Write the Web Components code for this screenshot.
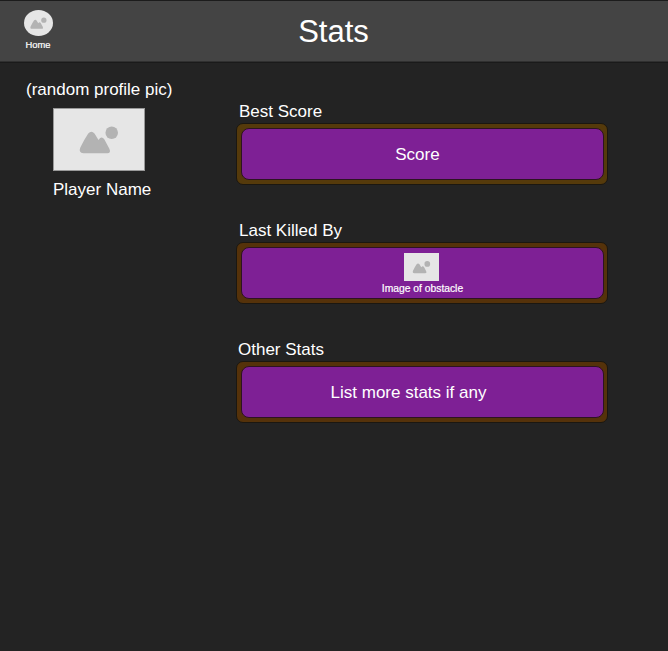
<!DOCTYPE html>
<html lang="en">
<head>
<meta charset="utf-8">
<title>Stats</title>
<style>
html,body{margin:0;height:100%;background:#232323}
body{font-family:"Liberation Sans",Arial,sans-serif;color:#fff;overflow:hidden}
</style>
</head>
<body>
<stats-page></stats-page>
<script>
const define = (name, html) => {
  const t = document.createElement('template');
  t.innerHTML = html;
  customElements.define(name, class extends HTMLElement {
    constructor() {
      super();
      this.attachShadow({mode: 'open'}).append(t.content.cloneNode(true));
    }
  });
};

define('picture-placeholder', `
<style>
:host{display:block;box-sizing:border-box;background:#e6e6e6;overflow:hidden}
svg{display:block;width:100%;height:100%}
</style>
<svg viewBox="0 0 92 63" preserveAspectRatio="xMidYMid slice" fill="#b3b3b3">
<circle cx="59" cy="24.6" r="6.4"/>
<path d="M30 45.5 Q24.8 45.3 26.9 39.8 Q30.5 32 35 25.3 Q38.2 21.6 41.4 25.3 L45.5 32 Q48.5 27.6 51.4 31.2 L56.6 41 Q58.6 45.5 54.5 45.5Z"/>
</svg>`);

define('home-link', `
<style>
:host{display:flex;flex-direction:column;align-items:center;width:29px;font-size:9.4px;line-height:11px;-webkit-text-stroke:.2px #fff}
picture-placeholder{width:29px;height:26px;border-radius:50%;margin-bottom:3px}
span{margin-right:1px}
</style>
<picture-placeholder></picture-placeholder><span><slot></slot></span>`);

define('top-bar', `
<style>
:host{display:grid;grid-template-columns:1fr auto 1fr;box-sizing:border-box;height:63px;background:#444;border-top:1px solid #1c1c1c;border-bottom:1px solid #1a1a1a;box-shadow:inset 0 -1px #303030}
.nav{padding:9px 0 0 24px}
h1{margin:13px 1px 0 0;font-size:31px;line-height:36px;font-weight:400}
</style>
<div class="nav"><slot name="nav"></slot></div><h1><slot></slot></h1>`);

define('player-card', `
<style>
:host{display:block;font-size:17px;line-height:20px}
.name{padding-left:27px;margin-top:9px}
picture-placeholder{width:92px;height:63px;border:1px solid #999;margin:8px 0 0 27px}
</style>
<div><slot name="caption"></slot></div>
<picture-placeholder></picture-placeholder>
<div class="name"><slot></slot></div>`);

define('stat-panel', `
<style>
:host{display:block;font-size:17px;line-height:20px}
.label{padding-left:var(--indent,3px)}
.frame{box-sizing:border-box;width:372px;height:62px;margin-top:1px;padding:4px 3px 4px 4px;background:var(--frame,#55320a);border:1px solid #1b1710;border-radius:7px}
.body{box-sizing:border-box;height:100%;border:1px solid #2d1322;border-radius:8px;background:#7e2095;display:flex;flex-direction:column;align-items:center;justify-content:center;padding:var(--drop,2px) var(--shift,10px) 0 0}
</style>
<div class="label"><slot name="label"></slot></div>
<div class="frame"><div class="body"><slot></slot></div></div>`);

define('obstacle-image', `
<style>
:host{display:flex;flex-direction:column;align-items:center;font-size:10.3px;line-height:11px;-webkit-text-stroke:.2px #fff}
picture-placeholder{width:35px;height:28px;margin:0 2px 2px 0}
</style>
<picture-placeholder></picture-placeholder><slot></slot>`);

define('stats-page', `
<style>
:host{display:block;min-height:100vh;background:#232323}
main{display:grid;grid-template-columns:210px 1fr;padding:17px 0 0 26px}
section{display:flex;flex-direction:column;gap:36px;padding-top:22px}
.best{--frame:#553a0b;--shift:10px}
.last{--shift:0px;--drop:0px}
.other{--shift:28px;--indent:2px}
</style>
<top-bar><home-link slot="nav">Home</home-link>Stats</top-bar>
<main>
<player-card><span slot="caption">(random profile pic)</span>Player Name</player-card>
<section>
<stat-panel class="best"><span slot="label">Best Score</span>Score</stat-panel>
<stat-panel class="last"><span slot="label">Last Killed By</span><obstacle-image>Image of obstacle</obstacle-image></stat-panel>
<stat-panel class="other"><span slot="label">Other Stats</span>List more stats if any</stat-panel>
</section>
</main>`);
</script>
</body>
</html>
